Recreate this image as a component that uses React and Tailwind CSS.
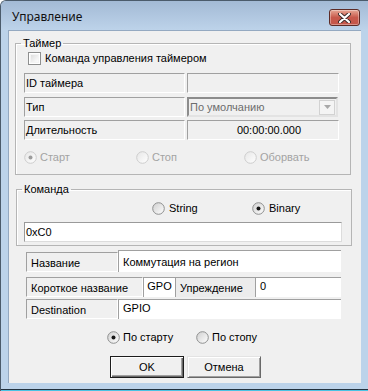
import React, { useId } from 'react';

const Radio = ({ checked = false, disabled = false }) => {
  const id = useId();
  return (
    <svg width="13" height="13" viewBox="0 0 13 13" className="shrink-0">
      <defs>
        <linearGradient id={id} x1="0" y1="0" x2="1" y2="1">
          <stop offset="0" stopColor={disabled ? '#e6e6e6' : '#cfcfcf'} />
          <stop offset="1" stopColor="#ffffff" />
        </linearGradient>
      </defs>
      <circle cx="6.5" cy="6.5" r="5.8" fill={`url(#${id})`} stroke={disabled ? '#cdcdcd' : '#8e8f8f'} />
      {checked && <circle cx="6.5" cy="6.5" r="2" fill={disabled ? '#9c9c9c' : '#161616'} />}
    </svg>
  );
};

const CheckBox = () => (
  <svg width="13" height="13" viewBox="0 0 13 13" className="shrink-0">
    <defs>
      <linearGradient id="chk" x1="0" y1="0" x2="1" y2="1">
        <stop offset="0" stopColor="#dcdcdc" />
        <stop offset="1" stopColor="#ffffff" />
      </linearGradient>
    </defs>
    <rect x="0.5" y="0.5" width="12" height="12" fill="#fff" stroke="#8e8f8f" />
    <rect x="2.5" y="2.5" width="8" height="8" fill="url(#chk)" stroke="#f4f4f4" />
  </svg>
);

const cell = 'h-full flex items-center border border-t-[#a0a0a0] border-l-[#a0a0a0] border-r-white border-b-white';

const App = () => {
  return (
    <div
      className="w-[368px] h-[391px] bg-[#bcd3ea] border-l border-t border-[#4b5b6b] rounded-tl-[6px] flex flex-col text-[11px] text-black overflow-hidden"
      style={{ fontFamily: '"Liberation Sans", Arial, sans-serif' }}
    >
      {/* title bar */}
      <div className="h-[29px] shrink-0 flex items-start justify-between bg-gradient-to-b from-[#a3bad5] to-[#bdd3ea] pl-[11px] pr-[8px]">
        <span
          className="mt-[8px] text-[12px] leading-[15px] text-[#111]"
          style={{ fontFamily: '"Noto Sans", sans-serif' }}
        >
          Управление
        </span>
        <button className="mt-[8px] w-[31px] h-[17px] rounded-[3px] border border-[#5d2b26] bg-gradient-to-b from-[#e6a796] via-[#c7584b] to-[#c4564a] flex items-center justify-center shadow-[inset_0_0_0_1px_rgba(255,255,255,0.35)]">
          <svg width="13" height="10" viewBox="0 0 13 10">
            <path d="M2 1 L11 9 M11 1 L2 9" stroke="#3a2a2a" strokeWidth="4" strokeLinecap="round" />
            <path d="M2 1 L11 9 M11 1 L2 9" stroke="#ffffff" strokeWidth="2.2" strokeLinecap="round" />
          </svg>
        </button>
      </div>

      {/* client area */}
      <div className="ml-[7px] w-[353px] h-[353px] shrink-0 bg-[#f0f0f0] border-l border-t border-[#94a9c1] flex flex-col">
        {/* Таймер */}
        <fieldset className="ml-[6px] mt-[5px] w-[336px] border border-[#b5b5b5] shadow-[inset_1px_1px_0_#fff] pl-[5px] pt-[1px] pb-[10px]">
          <legend className="px-[2px] leading-[14px]">Таймер</legend>
          <div className="flex items-center h-[14px] ml-[7px]">
            <CheckBox />
            <span className="ml-[4px]">Команда управления таймером</span>
          </div>

          <div className="flex h-[20px] mt-[8px] ml-[3px]">
            <div className={`w-[161px] pl-[1px] ${cell}`}>ID таймера</div>
            <div className={`w-[152px] ml-[2px] ${cell}`}></div>
          </div>
          <div className="flex h-[20px] mt-[4px] ml-[3px]">
            <div className={`w-[161px] pl-[1px] ${cell}`}>Тип</div>
            <div className="w-[151px] ml-[2px] h-full flex items-center border-2 border-t-[#8c8c8c] border-l-[#8c8c8c] border-r-[#e3e3e3] border-b-[#e3e3e3] bg-[#f0f0f0]">
              <span className="flex-1 pl-[1px] text-[#6d6d6d]">По умолчанию</span>
              <div className="w-[16px] h-[15px] mr-[1px] border border-[#d2d2d2] bg-[#f4f4f4] flex items-center justify-center">
                <svg width="7" height="4" viewBox="0 0 7 4">
                  <path d="M0 0 H7 L3.5 4 Z" fill="#a8a8a8" />
                </svg>
              </div>
            </div>
          </div>
          <div className="flex h-[20px] mt-[3px] ml-[3px]">
            <div className={`w-[161px] pl-[1px] ${cell}`}>Длительность</div>
            <div className={`w-[152px] ml-[2px] justify-center pl-[12px] ${cell}`}>00:00:00.000</div>
          </div>

          <div className="flex items-center h-[14px] mt-[10px] ml-[3px] text-[#a3a3a3]">
            <div className="w-[112px] flex items-center">
              <Radio checked disabled />
              <span className="ml-[3px]">Старт</span>
            </div>
            <div className="w-[108px] flex items-center">
              <Radio disabled />
              <span className="ml-[3px]">Стоп</span>
            </div>
            <div className="flex items-center">
              <Radio disabled />
              <span className="ml-[3px]">Оборвать</span>
            </div>
          </div>
        </fieldset>

        {/* Команда */}
        <fieldset className="ml-[7px] mt-[7px] w-[336px] border border-[#b5b5b5] shadow-[inset_1px_1px_0_#fff] pl-[5px] pt-[5px] pb-[3px]">
          <legend className="px-[2px] leading-[14px]">Команда</legend>
          <div className="flex items-center h-[14px] ml-[130px]">
            <div className="w-[100px] flex items-center">
              <Radio />
              <span className="ml-[4px]">String</span>
            </div>
            <div className="flex items-center">
              <Radio checked />
              <span className="ml-[4px]">Binary</span>
            </div>
          </div>
          <div className="h-[20px] mt-[7px] ml-[2px] w-[318px] bg-white flex items-center pl-[1px] border border-t-[#9a9a9a] border-l-[#9a9a9a] border-r-[#dcdcdc] border-b-[#dcdcdc]">
            0xC0
          </div>
        </fieldset>

        {/* свойства */}
        <div className="flex h-[20px] mt-[6px] ml-[17px]">
          <div className={`w-[92px] pl-[4px] pt-[2px] ${cell}`}>Название</div>
          <div className="w-[223px] -mt-[2px] h-[22px] bg-white flex items-start pl-[4px] pt-[3px] border-t border-l border-[#a0a0a0]">
            Коммутация на регион
          </div>
        </div>
        <div className="flex h-[20px] mt-[5px] ml-[17px]">
          <div className={`w-[117px] pl-[4px] pt-[2px] ${cell}`}>Короткое название</div>
          <div className="w-[32px] h-full bg-white flex items-start justify-center border-t border-l border-[#a0a0a0]">GPO</div>
          <div className="w-[80px] h-full bg-[#ececec] flex items-center pl-[4px] pt-[2px] border-t border-l border-[#a0a0a0]">Упреждение</div>
          <div className="w-[86px] h-full bg-white flex items-start pl-[4px] border-t border-l border-[#a0a0a0]">0</div>
        </div>
        <div className="flex h-[20px] mt-[2px] ml-[17px]">
          <div className={`w-[92px] pl-[4px] pt-[2px] ${cell}`}>Destination</div>
          <div className="w-[223px] h-full bg-white flex items-start pl-[4px] border-t border-l border-[#a0a0a0]">GPIO</div>
        </div>

        <div className="flex items-center h-[14px] mt-[11px] ml-[98px]">
          <div className="w-[89px] flex items-center">
            <Radio checked />
            <span className="ml-[3px]">По старту</span>
          </div>
          <div className="flex items-center">
            <Radio />
            <span className="ml-[3px]">По стопу</span>
          </div>
        </div>

        <div className="flex mt-[12px] ml-[101px] gap-[3px]">
          <button className="w-[74px] h-[22px] bg-[#f0f0f0] border border-[#1c1c1c] shadow-[inset_1px_1px_0_#fff,inset_-1px_-1px_0_#696969,inset_-2px_-2px_0_#a0a0a0] flex items-center justify-center">
            OK
          </button>
          <button className="w-[74px] h-[22px] bg-[#f0f0f0] border border-t-[#e3e3e3] border-l-[#e3e3e3] border-r-[#696969] border-b-[#696969] shadow-[inset_1px_1px_0_#fff,inset_-1px_-1px_0_#a0a0a0] flex items-center justify-center">
            Отмена
          </button>
        </div>
      </div>

      {/* нижняя рамка */}
      <div className="flex-1 flex flex-col justify-end">
        <div className="h-[1px] bg-[#23323f]" />
        <div className="h-[1px] bg-[#4bc3e3]" />
      </div>
    </div>
  );
};

export default App;
